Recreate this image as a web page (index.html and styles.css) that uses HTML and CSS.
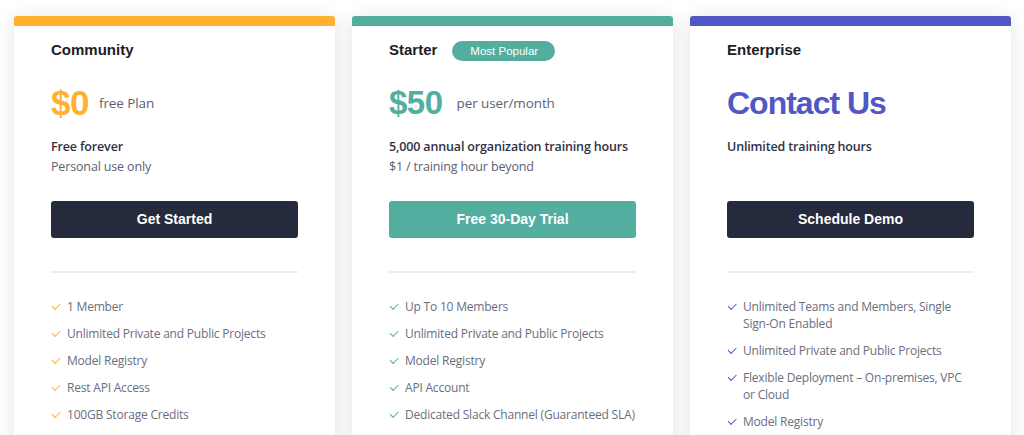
FILE: index.html
```html
<!DOCTYPE html>
<html lang="en">
<head>
  <meta charset="UTF-8">
  <meta name="viewport" content="width=device-width, initial-scale=1.0">
  <title>Pricing</title>
  <link rel="stylesheet" href="styles.css">
</head>
<body>
  <div class="plans">

    <!-- Community -->
    <div class="card community">
      <div class="card-body">
        <div class="plan-head"><h3>Community</h3></div>
        <div class="price"><span class="amount">$0</span><span class="unit">free Plan</span></div>
        <div class="desc">
          <div class="strong">Free forever</div>
          <div>Personal use only</div>
        </div>
        <a class="btn">Get Started</a>
        <hr>
        <ul class="features">
          <li>1 Member</li>
          <li>Unlimited Private and Public Projects</li>
          <li>Model Registry</li>
          <li>Rest API Access</li>
          <li>100GB Storage Credits</li>
        </ul>
      </div>
    </div>

    <!-- Starter -->
    <div class="card starter">
      <div class="card-body">
        <div class="plan-head"><h3>Starter</h3><span class="badge">Most Popular</span></div>
        <div class="price"><span class="amount">$50</span><span class="unit">per user/month</span></div>
        <div class="desc">
          <div class="strong">5,000 annual organization training hours</div>
          <div>$1 / training hour beyond</div>
        </div>
        <a class="btn">Free 30-Day Trial</a>
        <hr>
        <ul class="features">
          <li>Up To 10 Members</li>
          <li>Unlimited Private and Public Projects</li>
          <li>Model Registry</li>
          <li>API Account</li>
          <li>Dedicated Slack Channel (Guaranteed SLA)</li>
        </ul>
      </div>
    </div>

    <!-- Enterprise -->
    <div class="card enterprise">
      <div class="card-body">
        <div class="plan-head"><h3>Enterprise</h3></div>
        <div class="price"><span class="amount">Contact Us</span></div>
        <div class="desc">
          <div class="strong">Unlimited training hours</div>
        </div>
        <a class="btn">Schedule Demo</a>
        <hr>
        <ul class="features">
          <li>Unlimited Teams and Members, Single Sign-On Enabled</li>
          <li>Unlimited Private and Public Projects</li>
          <li>Flexible Deployment – On-premises, VPC or Cloud</li>
          <li>Model Registry</li>
        </ul>
      </div>
    </div>

  </div>
</body>
</html>
```

FILE: styles.css
```css
body {
  margin: 0;
  background: #fff;
  font-family: "Open Sans", Arial, sans-serif;
  color: #5d6172;
}
.plans {
  display: flex;
  gap: 17px;
  padding: 16px 13px 0 14px;
}
.card {
  width: 321px;
  flex: none;
  background: #fff;
  border-top: 10px solid #ffb12f;
  border-radius: 3px 3px 0 0;
  box-shadow: 0 2px 20px rgba(0, 0, 0, 0.11);
}
.card.starter { border-top-color: #53ae9f; }
.card.enterprise { border-top-color: #5157c5; }
.card-body {
  padding: 13px 37px 40px 37px;
}
.plan-head {
  display: flex;
  align-items: center;
  height: 20px;
}
h3 {
  margin: 0;
  font-family: "Liberation Sans", Arial, sans-serif;
  font-size: 15px;
  font-weight: bold;
  color: #1c1d24;
}
.badge {
  margin: 4px 0 0 15px;
  background: #53ae9f;
  color: #fff;
  font-family: "Liberation Sans", Arial, sans-serif;
  font-size: 11.5px;
  line-height: 20px;
  padding: 0 17px 0 18px;
  border-radius: 10px;
}
.price {
  display: flex;
  align-items: center;
  margin-top: 24px;
  height: 40px;
}
.amount {
  font-family: "Liberation Sans", Arial, sans-serif;
  font-weight: bold;
  font-size: 33px;
  letter-spacing: -0.5px;
  color: #ffb12f;
}
.community .amount { font-size: 35px; }
.starter .amount { color: #53ae9f; }
.enterprise .amount { color: #5157c5; font-size: 32px; letter-spacing: -1px; }
.unit {
  margin-left: 14px;
  font-size: 13.5px;
  letter-spacing: -0.1px;
  color: #5d6172;
}
.community .unit { margin-left: 10px; }
.desc {
  margin-top: 14px;
  height: 40px;
  font-size: 12.5px;
  letter-spacing: -0.15px;
  line-height: 20px;
  color: #5d6172;
}
.desc .strong {
  font-weight: 600;
  color: #2e3142;
}
.btn {
  display: block;
  margin-top: 24px;
  height: 37px;
  line-height: 37px;
  text-align: center;
  background: #262a3d;
  color: #fff;
  border-radius: 3px;
  font-family: "Liberation Sans", Arial, sans-serif;
  font-weight: bold;
  font-size: 14px;
}
.starter .btn { background: #53ae9f; }
hr {
  margin: 33px 0 0 0;
  border: none;
  height: 2px;
  background: #ececf2;
}
.features {
  list-style: none;
  margin: 25px 0 0 0;
  padding: 0;
}
.features li {
  position: relative;
  padding-left: 16px;
  font-size: 12px;
  letter-spacing: -0.2px;
  line-height: 17px;
  margin-bottom: 10px;
  color: #6a6e80;
}
.features li::before {
  content: "";
  position: absolute;
  left: 1px;
  top: 5px;
  width: 7px;
  height: 3.5px;
  border-left: 1.3px solid #ffb12f;
  border-bottom: 1.3px solid #ffb12f;
  transform: rotate(-45deg);
}
.starter .features li::before { border-color: #53ae9f; }
.enterprise .features li::before { border-color: #5157c5; }
```
